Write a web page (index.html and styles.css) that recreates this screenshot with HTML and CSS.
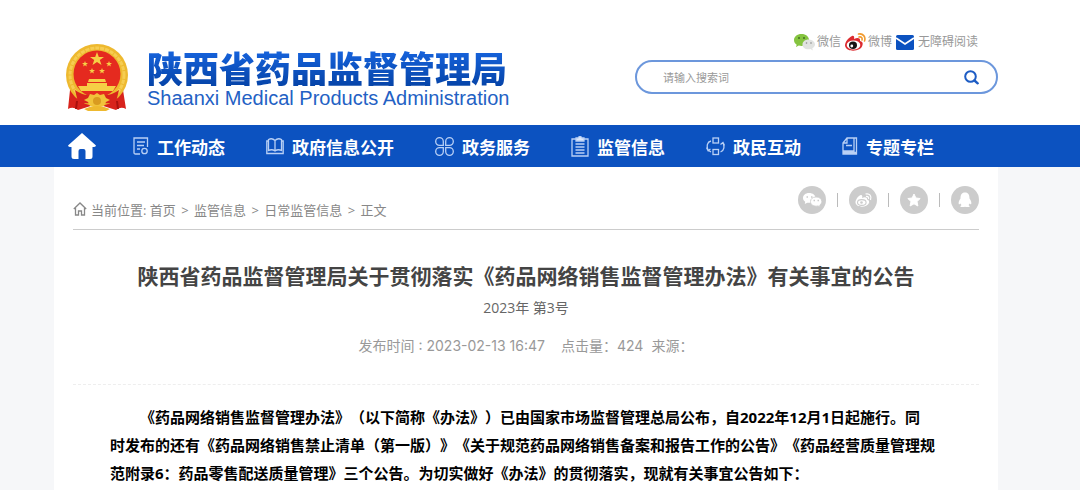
FILE: index.html
```html
<!DOCTYPE html>
<html lang="zh-CN">
<head>
    <meta charset="UTF-8">
    <meta name="viewport" content="width=device-width, initial-scale=1.0">
    <title>陕西省药品监督管理局</title>
    <link rel="stylesheet" href="styles.css">
</head>
<body>

    <header class="header">
        <a class="logo" href="#">
            <svg class="emblem" viewBox="0 0 62 68" aria-hidden="true">
                <path d="M4 46 L2 65 Q7 62 12 66 L31 60 L50 66 Q55 62 60 65 L57 46 Z" fill="#d8231c"/>
                <circle cx="31" cy="31" r="31" fill="#eeb92f"/>
                <circle cx="31" cy="31" r="27" fill="none" stroke="#f6cd52" stroke-width="3" stroke-dasharray="4 1"/>
                <circle cx="31" cy="30" r="23.500" fill="#e52a1f"/>
                <path d="M31 8 L32.800 13 H38 L33.800 16 L35.500 21 L31 18 L26.500 21 L28.200 16 L24 13 H29.200 Z" fill="#f6cf45"/>
                <path d="M19 17 l.8 2 h2.200 l-1.800 1.400 .7 2.200 -1.900-1.300 -1.900 1.300 .7-2.200 -1.800-1.400 h2.200 Z M43 17 l.8 2 h2.200 l-1.800 1.400 .7 2.200 -1.900-1.300 -1.900 1.300 .7-2.200 -1.800-1.400 h2.200 Z M26 24 l.8 2 h2.200 l-1.800 1.400 .7 2.200 -1.900-1.300 -1.900 1.300 .7-2.200 -1.800-1.400 h2.200 Z M36 24 l.8 2 h2.200 l-1.800 1.400 .7 2.200 -1.900-1.300 -1.900 1.300 .7-2.200 -1.800-1.400 h2.200 Z" fill="#f6cf45"/>
                <path d="M23 35 H39 L40 38 H22 Z M21 39 H41 V42 H50 L47 47 H15 L12 42 H21 Z" fill="#f6cf45"/>
                <path d="M9 46 Q20 54 31 50 Q42 54 53 46 L50 58 Q39 61 31 57 Q23 61 12 58 Z" fill="#d8231c"/>
                <path d="M31 49 l3 2 4-1 2 4 4 2 -4 2 -2 4 -7 2 -7-2 -2-4 -4-2 4-2 2-4 4 1 Z" fill="#f1c33a"/>
                <circle cx="31" cy="57" r="4" fill="#d99b20"/>
                <path d="M11 57 L10 65 M51 57 L52 65" stroke="#a9110e" stroke-width="2"/>
                <path d="M18 65 Q31 59 44 65 L40 67 H22 Z" fill="#eeb92f"/>
            </svg>
            <span class="logo-text">
                <span class="logo-cn">陕西省药品监督管理局</span>
                <span class="logo-en">Shaanxi Medical Products Administration</span>
            </span>
        </a>

        <div class="tools">
            <div class="tool-links">
                <a href="#">
                    <svg width="21" height="17" viewBox="0 0 21 17" aria-hidden="true">
                        <path d="M7.500 0 C3 0 0 2.700 0 6 C0 8 1 9.600 2.700 10.700 L2 13 L4.800 11.600 C9 12.800 15 11 15 6 C15 2.700 12 0 7.500 0 Z" fill="#85c440"/>
                        <path d="M14.500 5.500 C11 5.500 8.500 7.800 8.500 10.500 C8.500 14 12 16 16.500 15 L18.800 16.500 L18.300 14.200 C20 13.300 21 12 21 10.500 C21 7.800 18 5.500 14.500 5.500 Z" fill="#e1e3e1"/>
                        <circle cx="5" cy="4" r="1" fill="#456d22"/><circle cx="10" cy="4" r="1" fill="#456d22"/>
                        <circle cx="12.500" cy="9" r=".8" fill="#888"/><circle cx="17" cy="9" r=".8" fill="#888"/>
                    </svg>
                    微信
                </a>
                <a href="#">
                    <svg width="21" height="18" viewBox="0 0 21 18" aria-hidden="true">
                        <path d="M7 3 C9 2 9.500 4 9 6 C13 4 15.500 5 15 8 C17.500 8.500 18 10 17.500 12 C16.500 19 1 20 0 12.500 C0 9 3.500 4.500 7 3 Z" fill="#dc2b30"/>
                        <ellipse cx="8.500" cy="12" rx="6.800" ry="4.500" fill="#fff"/>
                        <ellipse cx="8" cy="12.300" rx="4" ry="3.700" fill="#171313"/>
                        <circle cx="6.800" cy="13" r="1.400" fill="#fff"/>
                        <path d="M13.500 1 C18 0 21 4 19.500 8 M14 4 C16.500 3.500 17.500 5 17 7" fill="none" stroke="#f19a2d" stroke-width="1.600" stroke-linecap="round"/>
                    </svg>
                    微博
                </a>
                <a class="wide" href="#">
                    <svg width="18" height="15" viewBox="0 0 18 15" aria-hidden="true">
                        <rect width="18" height="15" rx="1.500" fill="#0c52c0"/>
                        <path d="M0 3 L9 9 L18 3" fill="none" stroke="#fff" stroke-width="1.700"/>
                    </svg>
                    无障碍阅读
                </a>
            </div>
            <form class="search">
                <input type="text" placeholder="请输入搜索词" aria-label="搜索词">
                <button type="button" aria-label="搜索">
                    <svg width="15" height="15" viewBox="0 0 15 15" aria-hidden="true">
                        <circle cx="6.500" cy="6.500" r="5.300" fill="none" stroke="#1d5cc4" stroke-width="2"/>
                        <path d="M10.500 10.500 L13.700 13.300" stroke="#1d5cc4" stroke-width="2.400" stroke-linecap="round"/>
                    </svg>
                </button>
            </form>
        </div>
    </header>

    <nav class="nav">
        <a class="home" href="#" aria-label="首页">
            <svg width="28" height="26" viewBox="0 0 28 26" aria-hidden="true">
                <path d="M14 0 L28 12.500 Q27.500 14.500 24.500 14 V23.500 Q24.500 26 22 26 H17.500 V18 Q17.500 16 15.500 16 H12.500 Q10.500 16 10.500 18 V26 H6 Q3.500 26 3.500 23.500 V14 Q.5 14.500 0 12.500 Z" fill="#fff"/>
            </svg>
        </a>
        <a href="#">
            <svg width="16" height="18" viewBox="0 0 16 18" aria-hidden="true">
                <path d="M7 17 H2.500 Q1 17 1 15.500 V1 H14.500 V10 M4 5 H12 M4 8.500 H11 M4 12 H7"/>
                <circle cx="11.500" cy="14" r="2.700"/>
            </svg>
            工作动态
        </a>
        <a href="#">
            <svg width="18" height="17" viewBox="0 0 18 17" aria-hidden="true">
                <path d="M9 2.500 C7 .5 4.500 .5 2.500 1.500 V12.500 C4.500 11.500 7 11.500 9 13 C11 11.500 13.500 11.500 15.500 12.500 V1.500 C13.500 .5 11 .5 9 2.500 V13 M2.500 3 H.8 V15.500 H17.200 V3 H15.500"/>
            </svg>
            政府信息公开
        </a>
        <a href="#">
            <svg width="19" height="19" viewBox="0 0 19 19" aria-hidden="true">
                <path d="M8.300 8.300 H4.500 A3.800 3.800 0 1 1 8.300 4.500 Z M10.700 8.300 V4.500 A3.800 3.800 0 1 1 14.500 8.300 Z M8.300 10.700 V14.500 A3.800 3.800 0 1 1 4.500 10.700 Z M10.700 10.700 H14.500 A3.800 3.800 0 1 1 10.700 14.500 Z"/>
            </svg>
            政务服务
        </a>
        <a href="#">
            <svg width="18" height="21" viewBox="0 0 18 21" aria-hidden="true">
                <path d="M5 3 H1 V20 H17 V3 H13 M4.500 8 H13.500 M4.500 11 H13.500 M4.500 14 H13.500 M4.500 17 H13.500"/>
                <path class="solid" d="M5 2 H7 Q9 -1 11 2 H13 V5 H5 Z"/>
            </svg>
            监管信息
        </a>
        <a href="#">
            <svg width="19" height="19" viewBox="0 0 19 19" aria-hidden="true">
                <rect x="7" y="1" width="5.500" height="5"/><rect x="7" y="12.500" width="5.500" height="5"/>
                <path d="M5 4 C1 5 .5 9 2 13 M.5 10.500 L2 13.500 L4.500 12 M2 13 L5 15 M14.500 15 C18.500 13.500 18.500 9 17 6 M14.500 7.500 L17 5.500 L18.500 8.500"/>
            </svg>
            政民互动
        </a>
        <a href="#">
            <svg width="16" height="18" viewBox="0 0 16 18" aria-hidden="true">
                <path d="M1 6 L5 1 H14.500 V17 H1 Z M5 1 V6 H1 M12 1 V14 H1 M4 8.500 H10 M1 15.500 H14"/>
            </svg>
            专题专栏
        </a>
    </nav>

    <div class="page">
        <main class="content">
            <div class="location">
                <div class="crumbs">
                    <svg width="14" height="14" viewBox="0 0 14 14" aria-hidden="true">
                        <path d="M.8 7 L7 1 L13.200 7 M2.500 6 V13 H5.500 V9 H8.500 V13 H11.500 V6" fill="none" stroke="#888" stroke-width="1.300"/>
                    </svg>
                    <span>当前位置: <a href="#">首页</a> <b>&gt;</b> <a href="#">监管信息</a> <b>&gt;</b> <a href="#">日常监管信息</a> <b>&gt;</b> <a href="#">正文</a></span>
                </div>
                <div class="share">
                    <a href="#" aria-label="微信">
                        <svg viewBox="0 0 28 28" aria-hidden="true">
                            <path d="M11 7 C7.500 7 5 9.200 5 12 C5 13.700 6 15 7.200 15.800 L6.800 18 L9.300 16.700 C14 17.500 17.500 15 17.500 12 C17.500 9.200 15 7 11 7 Z" fill="#fff"/>
                            <path d="M18 11 C14.500 11 12.500 13 12.500 15.500 C12.500 19 16 20.800 20 19.900 L22.200 21 L21.800 19 C23 18.200 23.800 17 23.800 15.500 C23.800 13 21.500 11 18 11 Z" fill="#fff" stroke="#ccc" stroke-width=".8"/>
                            <path d="M8.500 11 h1.500 M13 11 h1.500 M15.500 14.500 h1.500 M19.500 14.500 h1.500" stroke="#ccc" stroke-width="1.500"/>
                        </svg>
                    </a>
                    <i></i>
                    <a href="#" aria-label="微博">
                        <svg viewBox="0 0 28 28" aria-hidden="true">
                            <path d="M12 9 C13.500 9 13.500 10.500 13 12 C16 10.500 18.500 11.500 18 13.500 C20 14 20.500 15.500 20 17 C18 22 7 22 6.500 16.500 C6.500 13.500 9.500 9.500 12 9 Z" fill="#fff"/>
                            <ellipse cx="12.800" cy="16.500" rx="4.300" ry="2.900" fill="none" stroke="#ccc" stroke-width="1.100"/>
                            <circle cx="12.500" cy="16.500" r="1.300" fill="#ccc"/>
                            <path d="M16.500 8 C20.500 7 23 10 21.500 14 M17 10.500 C19 10 20 11.500 19.500 13" fill="none" stroke="#fff" stroke-width="1.200"/>
                        </svg>
                    </a>
                    <i></i>
                    <a href="#" aria-label="收藏">
                        <svg viewBox="0 0 28 28" aria-hidden="true">
                            <path d="M14 8 L15.900 12 L20.200 12.500 L17 15.500 L17.900 20 L14 17.800 L10.100 20 L11 15.500 L7.800 12.500 L12.100 12 Z" fill="#fff" stroke="#fff" stroke-linejoin="round"/>
                        </svg>
                    </a>
                    <i></i>
                    <a href="#" aria-label="QQ">
                        <svg viewBox="0 0 28 28" aria-hidden="true">
                            <path d="M14 6.500 C10.500 6.500 9.500 9 9.500 12.500 C8 14.500 7 17 8 18.500 L9.500 17.500 Q10 18.500 10.500 19 Q9 19.800 9.500 21 H13.500 L14 20.500 L14.500 21 H18.500 Q19 19.800 17.500 19 Q18 18.500 18.500 17.500 L20 18.500 C21 17 20 14.500 18.500 12.500 C18.500 9 17.500 6.500 14 6.500 Z" fill="#fff"/>
                        </svg>
                    </a>
                </div>
            </div>

            <h1>陕西省药品监督管理局关于贯彻落实《药品网络销售监督管理办法》有关事宜的公告</h1>
            <p class="number">2023年 第3号</p>
            <p class="meta"><span>发布时间 : 2023-02-13 16:47</span><span>点击量：424</span><span>来源：</span></p>

            <div class="article">
                <p>《药品网络销售监督管理办法》（以下简称《办法》）已由国家市场监督管理总局公布，自2022年12月1日起施行。同<br>时发布的还有《药品网络销售禁止清单（第一版）》《关于规范药品网络销售备案和报告工作的公告》《药品经营质量管理规<br>范附录6：药品零售配送质量管理》三个公告。为切实做好《办法》的贯彻落实，现就有关事宜公告如下：</p>
            </div>
        </main>
    </div>

</body>
</html>
```
FILE: styles.css
```css
* {
    margin: 0;
    padding: 0;
    box-sizing: border-box;
}

body {
    font-family: "Open Sans", "Noto Sans CJK SC", sans-serif;
    background-color: #fff;
    text-spacing-trim: space-all;
}

a {
    color: inherit;
    text-decoration: none;
}

svg {
    display: block;
    flex-shrink: 0;
}

.header {
    display: flex;
    justify-content: space-between;
    align-items: flex-start;
    height: 125px;
    padding: 32px 82px 0 66px;
}

.logo {
    display: flex;
    gap: 19px;
    padding-top: 12px;
}

.emblem {
    width: 62px;
    height: 68px;
}

.logo-text {
    display: flex;
    flex-direction: column;
    padding-top: 4px;
    white-space: nowrap;
}

.logo-cn {
    font-family: "Noto Sans CJK SC", sans-serif;
    font-size: 36px;
    font-weight: 900;
    line-height: 38px;
    color: transparent;
    background: linear-gradient(#1765e0, #0644a8);
    background-clip: text;
}

.logo-en {
    font-family: "Liberation Sans", sans-serif;
    font-size: 20px;
    line-height: 24px;
    color: #2361c4;
}

.tools {
    width: 363px;
}

.tool-links {
    display: flex;
    justify-content: flex-end;
    gap: 4px;
    padding-right: 20px;
    font-size: 12px;
    line-height: 20px;
    color: #999;
}

.tool-links a {
    display: flex;
    align-items: center;
    gap: 2px;
}

.tool-links .wide {
    gap: 4px;
}

.search {
    display: flex;
    align-items: center;
    height: 34px;
    margin-top: 8px;
    padding: 0 17px 0 26px;
    border: 2px solid #6c97dc;
    border-radius: 17px;
}

.search input {
    flex: 1;
    min-width: 0;
    border: none;
    outline: none;
    font-family: inherit;
    font-size: 11px;
    background: none;
}

.search input::placeholder {
    color: #999;
}

.search button {
    border: none;
    background: none;
    cursor: pointer;
}

.nav {
    display: flex;
    align-items: center;
    gap: 41px;
    height: 42px;
    padding: 0 68px;
    background-color: #0c52c0;
    color: #fff;
    font-size: 17px;
    font-weight: bold;
    white-space: nowrap;
}

.nav a {
    display: flex;
    align-items: center;
    gap: 8px;
}

.nav .home {
    margin-right: -4px;
}

.nav a:not(.home) svg {
    fill: none;
    stroke: #b9d0f5;
    stroke-width: 1.3;
}

.nav svg .solid {
    fill: #dce8fb;
}

.page {
    padding: 0 82px 0 54px;
    background-color: #f6f7f9;
}

.content {
    min-height: 323px;
    padding: 0 19px;
    background-color: #fff;
}

.location {
    display: flex;
    justify-content: space-between;
    height: 63px;
    border-bottom: 1px solid #ccc;
}

.crumbs {
    display: flex;
    align-items: center;
    gap: 4px;
    padding-top: 22px;
    font-size: 13px;
    color: #888;
}

.crumbs b {
    margin: 0 2px;
    font-weight: normal;
}

.share {
    display: flex;
    align-items: center;
    gap: 11px;
    padding-top: 4px;
}

.share a {
    width: 28px;
    height: 28px;
    border-radius: 50%;
    background-color: #ccc;
}

.share i {
    width: 1px;
    height: 14px;
    background-color: #bbb;
}

h1 {
    margin-top: 30px;
    text-align: center;
    font-size: 21px;
    line-height: 32px;
    color: #444;
}

.number {
    margin-top: 6px;
    text-align: center;
    font-size: 14px;
    line-height: 20px;
    color: #666;
}

.meta {
    display: flex;
    justify-content: center;
    gap: 8px;
    padding: 16px 0 26px;
    border-bottom: 1px dashed #eee;
    font-family: Inter, "Noto Sans CJK SC", sans-serif;
    font-size: 14px;
    line-height: 24px;
    color: #999;
}

.meta span:first-child {
    margin-right: 8px;
}

.article {
    padding: 18px 37px 0;
    font-size: 15px;
    font-weight: bold;
    line-height: 28px;
    color: #000;
    white-space: nowrap;
}

.article p {
    text-indent: 2em;
}
```
